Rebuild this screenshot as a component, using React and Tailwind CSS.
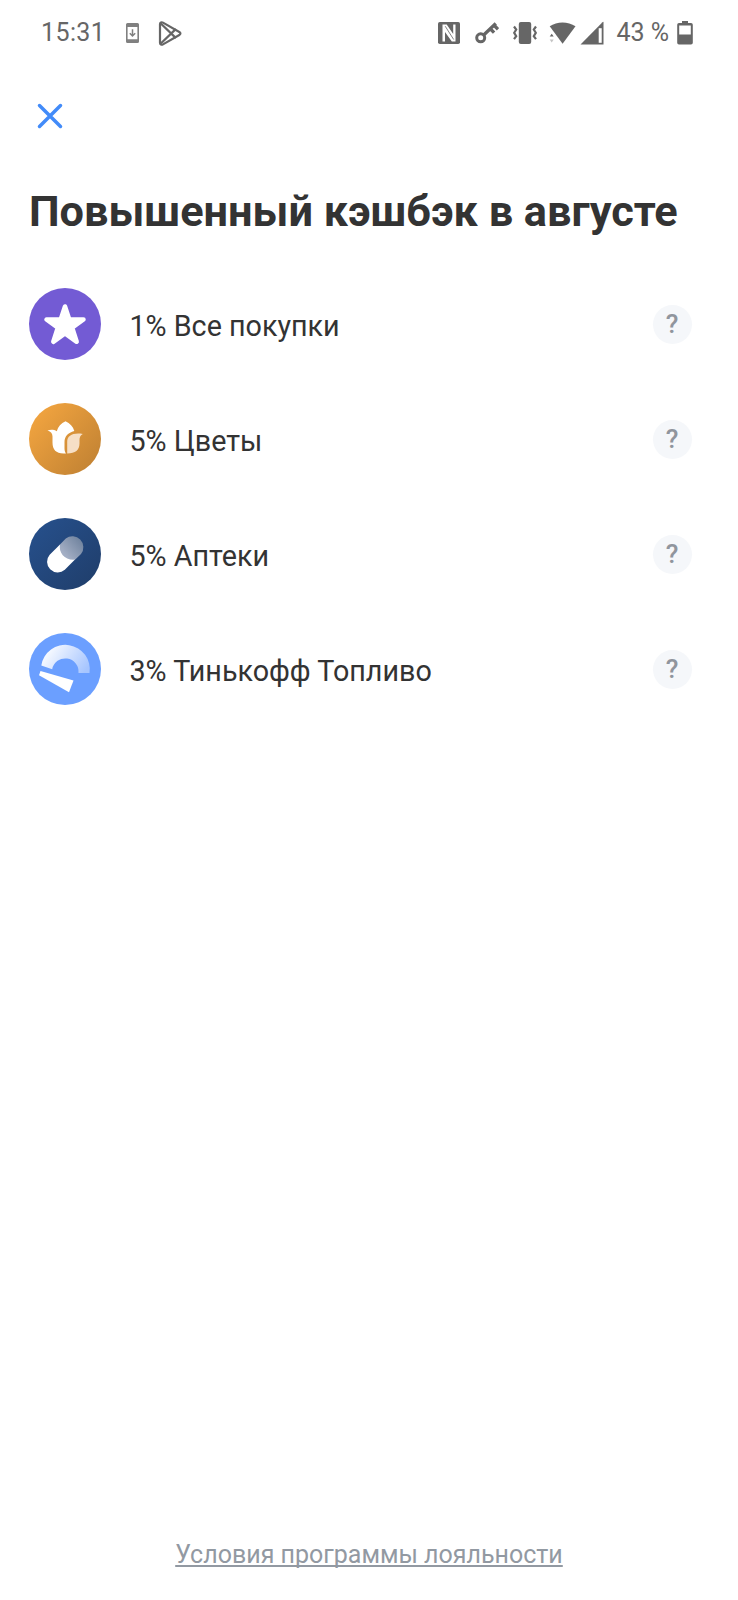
import React from 'react';

// --- Status bar icons ---
const DownloadIcon = () => (
  <svg className="h-5 w-[13px] text-[#808080]" viewBox="0 0 13 20" fill="none">
    <path fill="currentColor" fillRule="evenodd" d="M1.5 0h10A1.5 1.5 0 0 1 13 1.5v17a1.5 1.5 0 0 1-1.5 1.5h-10A1.5 1.5 0 0 1 0 18.500v-17A1.5 1.5 0 0 1 1.500 0zM1.600 4v12.200h9.800V4z" />
    <path stroke="currentColor" strokeWidth="1.500" d="M6.500 6.200v6.500M3.800 10.200l2.700 2.800 2.700-2.800" />
  </svg>
);

const PlayIcon = () => (
  <svg className="ml-[19px] h-[25px] w-6" viewBox="0 0 24 25" fill="none" stroke="currentColor" strokeWidth="2.200" strokeLinejoin="round" strokeLinecap="round">
    <path d="M2 3.300C2 1.500 3.600.800 5 1.600L21.300 11c1.500.9 1.500 2.200 0 3L5 23.400c-1.400.8-3 .1-3-1.700z" />
    <path d="M2.800 2.500L17.200 16.400M2.800 22.500L17.200 8.600" />
  </svg>
);

const NfcIcon = () => (
  <svg className="h-[22px] w-[22px]" viewBox="0 0 22 22">
    <rect width="22" height="22" rx="1.800" fill="currentColor" />
    <path d="M4.500 2.500h4.200L15.200 12V2.500h2.300v17h-3.700L7 10v9.500H4.500z" fill="white" />
    <path d="M7.200 4.200l8.500 13.300" stroke="currentColor" strokeWidth="0.800" />
  </svg>
);

const KeyIcon = () => (
  <svg className="ml-[15px] h-[22px] w-6" viewBox="0 0 24 22" fill="none" stroke="currentColor">
    <circle cx="5.700" cy="15.800" r="4" strokeWidth="3" />
    <path strokeWidth="3.300" d="M8.700 13L20.800 1.500M15.500 7l3.600 3.700M19.300 3.500l3.700 3.800" />
  </svg>
);

const VibrateIcon = () => (
  <svg className="ml-[14px] h-[22px] w-6" viewBox="0 0 24 22" fill="none">
    <rect x="5.800" y="0" width="12.400" height="22" rx="2" fill="currentColor" />
    <path stroke="currentColor" strokeWidth="2.200" d="M1 4.500l2.200 3-2 3.300 2 3.300-2.200 3M23 4.500l-2.200 3 2 3.300-2 3.300 2.200 3" />
  </svg>
);

const WifiIcon = () => (
  <svg className="ml-3 h-6 w-[27px]" viewBox="0 0 27 24">
    <path fill="currentColor" d="M.700 5.300C8 .100 19 .100 26.500 5.300L13.600 22.800z" />
    <path fill="currentColor" d="M.700 15.500h4L2.700 12.700z" />
    <path fill="#c4c4c4" d="M.700 18.500h4l-2 3z" />
  </svg>
);

const SignalIcon = () => (
  <svg className="ml-1 h-6 w-6" viewBox="0 0 24 24">
    <path fill="currentColor" d="M.500 23.500L22.500 1.200Q23.500.200 23.500 1.500V23.500z" />
    <path fill="white" d="M18.700 7.200h3v14.600h-3z" />
  </svg>
);

const BatteryIcon = () => (
  <svg className="ml-2 h-6 w-4" viewBox="0 0 16 24">
    <path fill="currentColor" fillRule="evenodd" d="M5 0h6v2h3a1.800 1.800 0 0 1 1.800 1.800v18A1.800 1.800 0 0 1 14 23.600H2A1.800 1.800 0 0 1 .200 21.800v-18A1.800 1.800 0 0 1 2 2h3zM2.200 4.600v9h11.600v-9z" />
  </svg>
);

// --- Category icons ---
const StarIcon = () => (
  <svg className="h-[72px] w-[72px]" viewBox="0 0 72 72">
    <circle cx="36" cy="36" r="36" fill="#735bd4" />
    <path fill="white" stroke="white" strokeWidth="4.500" strokeLinejoin="round" d="M36 18.500L40.300 31.500H54.500L43.200 39.600 47.700 53.800 36 45.500 24.300 53.800 28.800 39.600 17.500 31.500H31.700z" />
  </svg>
);

const FlowerIcon = () => (
  <svg className="h-[72px] w-[72px]" viewBox="0 0 72 72">
    <defs>
      <linearGradient id="flower" x1="0.100" y1="0.150" x2="0.900" y2="0.850">
        <stop stopColor="#f0a33f" />
        <stop offset="1" stopColor="#c48434" />
      </linearGradient>
    </defs>
    <circle cx="36" cy="36" r="36" fill="url(#flower)" />
    <path fill="white" d="M18.500 27.500C22 26.300 25 26.700 27.800 28.200C29 23.500 32 20.500 36.500 18.300C41 20.500 44 23.500 45.300 28C39 29.700 35.500 33.500 35.500 39V45.500C35.500 47.700 36 49.200 37 50.500H34.500C27 50.500 23.500 46.500 23.500 39.500V33.500C23.500 30.500 22 28.500 18.500 27.500z" />
    <path fill="#f6dfc6" d="M38.200 50.500V39C38.200 32.500 44 29.500 53.800 31C51 32.500 50.500 34.500 50.500 37.500V40.500C50.500 47 46.500 50.500 38.200 50.500z" />
  </svg>
);

const PillIcon = () => (
  <svg className="h-[72px] w-[72px]" viewBox="0 0 72 72">
    <defs>
      <linearGradient id="pharmacy" x1="0.100" y1="0.100" x2="0.900" y2="0.900">
        <stop stopColor="#264f8a" />
        <stop offset="1" stopColor="#203f6d" />
      </linearGradient>
      <linearGradient id="pill" x1="0.850" y1="0.100" x2="0.150" y2="0.700">
        <stop stopColor="#71849f" />
        <stop offset="1" stopColor="#a3aec4" />
      </linearGradient>
    </defs>
    <circle cx="36" cy="36" r="36" fill="url(#pharmacy)" />
    <path fill="white" d="M31 26.400L20.700 36.700A10.700 10.700 0 0 0 35.800 51.800L46 41.600z" />
    <path fill="url(#pill)" d="M31 26.400L36.800 20.600A10.900 10.900 0 0 1 52 36L46.300 41.600C36.500 42.800 29.300 35 31 26.400z" />
  </svg>
);

const FuelIcon = () => (
  <svg className="h-[72px] w-[72px]" viewBox="0 0 72 72">
    <defs>
      <linearGradient id="gauge" x1="0" y1="0.300" x2="1" y2="0.700">
        <stop stopColor="white" />
        <stop offset="1" stopColor="#a6c5ff" />
      </linearGradient>
    </defs>
    <circle cx="36" cy="36" r="36" fill="#6b9fff" />
    <path fill="url(#gauge)" d="M12.300 32.500A24.300 24.300 0 0 1 60.500 40H49.500A13.300 13.300 0 0 0 23.200 36.200z" />
    <path fill="white" d="M11.500 38L44.500 47.500 40 59.200 10 42.300z" />
  </svg>
);

const categories = [
  { title: '1% Все покупки', icon: <StarIcon /> },
  { title: '5% Цветы', icon: <FlowerIcon /> },
  { title: '5% Аптеки', icon: <PillIcon /> },
  { title: '3% Тинькофф Топливо', icon: <FuelIcon /> },
];

const StatusBar = () => (
  <div className="flex h-[66px] items-center justify-between pl-[41px] pr-[45px] text-[25px] font-[450] text-[#666]">
    <div className="flex items-center">
      <span className="w-[85px] tracking-[0.4px]">15:31</span>
      <DownloadIcon />
      <PlayIcon />
    </div>
    <div className="flex items-center">
      <NfcIcon />
      <KeyIcon />
      <VibrateIcon />
      <WifiIcon />
      <SignalIcon />
      <span className="ml-3">43 %</span>
      <BatteryIcon />
    </div>
  </div>
);

const CategoryRow = ({ title, icon }) => (
  <li className="flex items-center">
    {icon}
    <span className="ml-[29px] flex-1 pt-1 text-[28.700px] leading-[34px]">{title}</span>
    <button aria-label={title} className="mt-px flex h-[39px] w-[39px] items-center justify-center rounded-full bg-[#f5f7fa] text-[26px] font-medium text-[#90959d]">
      ?
    </button>
  </li>
);

export default function App() {
  return (
    <div className="flex min-h-[1600px] w-full flex-col bg-white font-['Roboto',sans-serif] text-[#333]">
      <StatusBar />

      <button aria-label="Закрыть" className="ml-[37px] mt-[37px] h-[26px] w-[26px] text-[#428bf9]">
        <svg viewBox="0 0 26 26" fill="none" stroke="currentColor" strokeWidth="3.500" strokeLinecap="round">
          <path d="M2.500 2.500l21 21M23.500 2.500l-21 21" />
        </svg>
      </button>

      <h1 className="ml-[29px] mt-[58px] whitespace-nowrap text-[43.300px] font-bold leading-[50px]">Повышенный кэшбэк в августе</h1>

      <ul className="ml-[28.500px] mr-[46.500px] mt-[51px] flex flex-col gap-[43px]">
        {categories.map((c) => (
          <CategoryRow key={c.title} title={c.title} icon={c.icon} />
        ))}
      </ul>

      <footer className="mt-auto pb-[30px] text-center text-[25px] leading-[30px] text-[#9299a2]">
        <a href="#" className="underline decoration-[1.5px] underline-offset-[2px] [text-decoration-skip-ink:none]">Условия программы лояльности</a>
      </footer>
    </div>
  );
}
